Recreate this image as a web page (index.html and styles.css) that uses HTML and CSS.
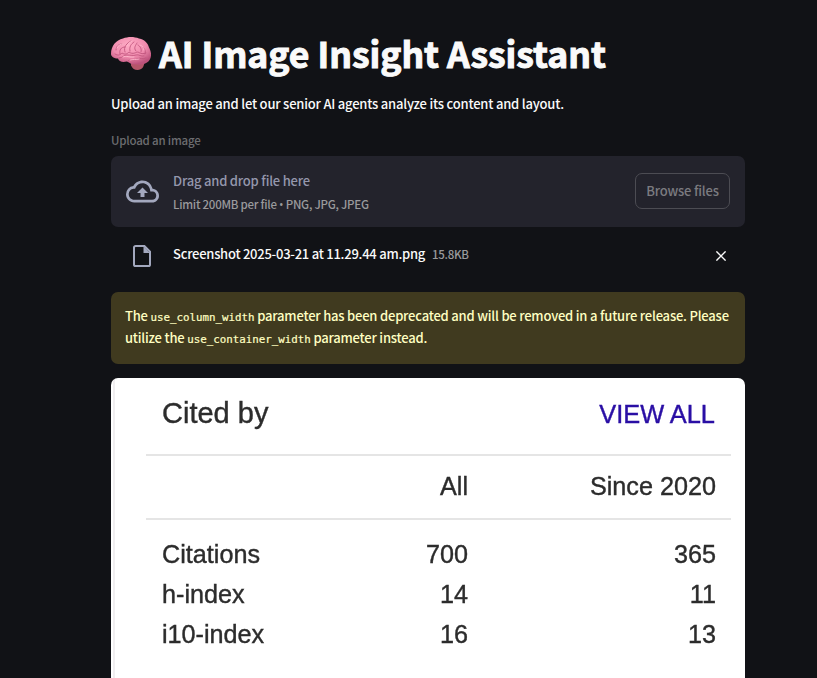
FILE: index.html
```html
<!DOCTYPE html>
<html lang="en">
<head>
<meta charset="utf-8">
<title>AI Image Insight Assistant</title>
<link rel="stylesheet" href="styles.css">
</head>
<body>
<main class="page">
  <h1 class="title">
    <svg class="brain" viewBox="0 0 40 34" aria-hidden="true">
      <defs>
        <radialGradient id="lobe" cx=".45" cy=".3" r=".7"><stop offset="0" stop-color="#ffacc5"/><stop offset=".6" stop-color="#f08bae"/><stop offset="1" stop-color="#bd527c"/></radialGradient>
      </defs>
      <path d="M20 24c4-1 9-2 13 0 1 5-2 9-6.500 9-3 0-5-1.500-6.500-4.500z" fill="#b5566a"/>
      <path d="M0 17C0 9 5 3 12 1.500c5-2 11-2 16 0 6 1 9 5 10 9 3 5 3 12-2 15-4 3-9 2-13 2-3 0-4-2-7-3-5 1-8 0-9-3-4 0-7-2-7-4.500z" fill="url(#lobe)"/>
      <path d="M5 13c0-4 3-6 6-6M9 17c-1-4 1-7 5-7M14 15c-2-5 2-9 6-11M19 14c-1-4 1-7 4-9M25 14c-3-3 0-6 1-8M30 15c1-3-1-6-3-7M34 17c1-3 0-5-2-7M4 17c3 2 5 1 7-1 3 2 5 1 7-1 4 3 7 0 9 0 3 2 5 2 8 1M8 21c4 0 4-3 8-3s6 1 9 0 5 2 8 1M17 24c3-3 6 0 9-2s6 1 9-1" fill="none" stroke="#c2577f" stroke-width=".9" stroke-linecap="round"/>
      <path d="M6 11c1-3 4-4 6-4M16 9c1-3 3-4 5-5M29 8c3 1 4 3 4 5M12 20c3-2 7 1 11 0M19 23c3-1 6 0 9-1" fill="none" stroke="#ffb9cd" stroke-width=".9" stroke-linecap="round"/>
    </svg>
    <span class="title-text">AI Image Insight Assistant</span>
  </h1>
  <p class="intro">Upload an image and let our senior AI agents analyze its content and layout.</p>

  <div class="label">Upload an image</div>
  <section class="dropzone">
    <svg class="cloud" viewBox="0 0 24 24" aria-hidden="true"><path fill="currentColor" d="M19.35 10.04A7.49 7.49 0 0 0 12 4C9.11 4 6.6 5.64 5.35 8.04A5.994 5.994 0 0 0 0 14c0 3.31 2.69 6 6 6h13c2.76 0 5-2.24 5-5 0-2.64-2.05-4.78-4.65-4.96zM19 18H6c-2.21 0-4-1.79-4-4 0-2.05 1.53-3.76 3.56-3.97l1.07-.11.5-.95A5.469 5.469 0 0 1 12 6c2.62 0 4.88 1.86 5.39 4.43l.3 1.5 1.53.11A2.98 2.98 0 0 1 22 15c0 1.65-1.35 3-3 3zM8 13h2.55v3h2.9v-3H16l-4-4z"/></svg>
    <div class="hint">
      <span class="hint-main">Drag and drop file here</span>
      <span class="hint-sub">Limit 200MB per file <span class="dot">•</span> PNG, JPG, JPEG</span>
    </div>
    <button class="browse">Browse files</button>
  </section>

  <div class="file">
    <svg class="doc" viewBox="0 0 18 22" aria-hidden="true"><path d="M2.600 1h8.800L17 6.600v12.800a1.600 1.600 0 0 1-1.600 1.600H2.600A1.600 1.600 0 0 1 1 19.400V2.600A1.600 1.600 0 0 1 2.600 1z" fill="none" stroke="currentColor" stroke-width="2"/><path d="M10.500 1v7H17z" fill="currentColor"/></svg>
    <span class="file-name">Screenshot 2025-03-21 at 11.29.44 am.png</span>
    <span class="file-size">15.8KB</span>
    <svg class="close" viewBox="0 0 10 10" aria-hidden="true"><path d="M.4.4l9.200 9.200M9.600.4L.4 9.600" stroke="currentColor" stroke-width="1.400"/></svg>
  </div>

  <div class="warning">
    <div class="line">The <code>use_column_width</code> parameter has been deprecated and will be removed in a future release. Please</div>
    <div class="line">utilize the <code>use_container_width</code> parameter instead.</div>
  </div>

  <div class="preview">
    <div class="cites">
      <div class="cites-head"><span>Cited by</span><span class="view-all">VIEW ALL</span></div>
      <div class="row row-head"><span></span><span>All</span><span>Since 2020</span></div>
      <div class="rows">
        <div class="row"><span>Citations</span><span>700</span><span>365</span></div>
        <div class="row"><span>h-index</span><span>14</span><span>11</span></div>
        <div class="row"><span>i10-index</span><span>16</span><span>13</span></div>
      </div>
    </div>
  </div>
</main>
</body>
</html>
```
FILE: styles.css
```css
* { box-sizing: border-box; }
html { height: 100%; overflow: hidden; }
body {
  margin: 0;
  height: 678px;
  overflow: hidden;
  background: #111216;
  color: #fafafa;
  font-family: "Noto Sans CJK SC", "Open Sans", sans-serif;
  font-size: 13px;
  letter-spacing: -.2px;
  white-space: nowrap;
}
.page { width: 634px; margin-left: 111px; padding-top: 29px; }
.title {
  display: flex;
  align-items: center;
  gap: 8px;
  height: 49px;
  margin: 0;
  font-size: 35.500px;
  font-weight: 700;
  line-height: 48px;
  letter-spacing: -.02px;
  -webkit-text-stroke: 1px #fafafa;
}
.title-text { margin-bottom: 2px; }
.brain { width: 40px; height: 34px; flex: none; }
.intro { margin: 15px 0 0; height: 22px; line-height: 22px; font-weight: 500; }
.label { margin-top: 15px; height: 20px; line-height: 20px; font-size: 11.500px; color: #6c6d70; font-weight: 500; }
.dropzone {
  display: flex;
  align-items: center;
  height: 71px;
  margin-top: 6px;
  padding: 0 15px;
  border-radius: 7px;
  background: #23232c;
}
.cloud { width: 33px; height: 33px; color: #a3a8be; flex: none; }
.hint { display: flex; flex-direction: column; margin-left: 14px; padding-top: 2px; flex: 1; }
.hint-main { height: 23px; line-height: 22px; color: #9497ac; font-weight: 500; }
.hint-sub { height: 22px; line-height: 22px; font-size: 11.500px; color: #9a9a9c; font-weight: 500; letter-spacing: -.25px; }
.dot { font-family: "Open Sans", sans-serif; font-size: 12px; line-height: 1; }
.browse {
  width: 95px;
  height: 36px;
  margin-bottom: 1px;
  padding: 0 0 2px;
  border: 1px solid #4c4c53;
  border-radius: 7px;
  background: transparent;
  color: #7b7b80;
  font: 500 13px "Noto Sans CJK SC", "Open Sans", sans-serif;
  letter-spacing: -.2px;
}
.file { display: flex; align-items: center; height: 35px; margin-top: 9px; padding: 0 19px 0 22px; }
.doc { width: 18px; height: 22px; margin-top: 4px; color: #a3a8be; flex: none; }
.file-name { margin-left: 22px; font-weight: 500; letter-spacing: -.25px; }
.file-size { margin-left: 7px; font-size: 11.500px; color: #9a9a9c; font-weight: 500; letter-spacing: -.3px; }
.close { width: 10px; height: 10px; margin: 4px 0 0 auto; }
.warning {
  height: 72px;
  margin-top: 21px;
  padding: 13px 14px 0;
  border-radius: 7px;
  background: #403a1f;
  color: #ffffc2;
  font-weight: 500;
}
.line { height: 22px; line-height: 22px; }
code { font: 10.800px "DejaVu Sans Mono", monospace; letter-spacing: 0; -webkit-text-stroke: .2px; }
.preview {
  height: 310px;
  margin-top: 14px;
  padding: 0 14px 0 35px;
  border-radius: 7px 7px 0 0;
  background: linear-gradient(90deg, #fff 2px, #f0eef0 2px, #f0eef0 4px, #fff 4px);
  color: #2c2c2c;
  font-family: "Liberation Sans", Arial, sans-serif;
  font-size: 25.200px;
  letter-spacing: 0;
}
.cites span { filter: blur(.6px); -webkit-text-stroke: .4px; }
.cites-head {
  display: flex;
  justify-content: space-between;
  height: 78px;
  padding: 0 16px;
  border-bottom: 2px solid #e5e5e5;
  line-height: 71px;
  font-size: 29px;
}
.cites-head .view-all { color: #2a0fa5; font-size: 25.400px; line-height: 72px; }
.row { display: grid; grid-template-columns: 156px 150px 248px; padding: 0 16px; line-height: 41px; height: 40px; }
.row span:not(:first-child) { text-align: right; }
.row-head { height: 64px; border-bottom: 2px solid #e5e5e5; line-height: 60px; }
.rows { padding-top: 14px; }
```
